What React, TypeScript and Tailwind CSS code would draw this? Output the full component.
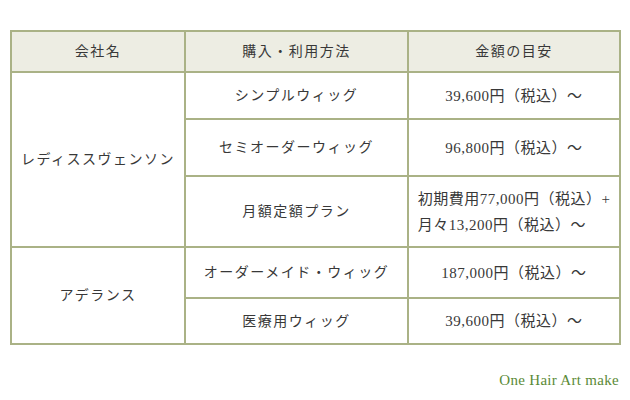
const font = { fontFamily: '"Liberation Serif", "Noto Sans CJK JP", serif' };

type Row = { company?: string; span?: number; method: string; price: string[]; h: string };

const rows: Row[] = [
  { company: "レディススヴェンソン", span: 3, method: "シンプルウィッグ", price: ["39,600円（税込）～"], h: "h-[47px]" },
  { method: "セミオーダーウィッグ", price: ["96,800円（税込）～"], h: "h-[57px]" },
  { method: "月額定額プラン", price: ["初期費用77,000円（税込）+", "月々13,200円（税込）～"], h: "h-[71px]" },
  { company: "アデランス", span: 2, method: "オーダーメイド・ウィッグ", price: ["187,000円（税込）～"], h: "h-[51px]" },
  { method: "医療用ウィッグ", price: ["39,600円（税込）～"], h: "h-[46px]" },
];

export default function App() {
  return (
    <div className="h-[400px] w-[630px] bg-white pt-[30px] pl-[10px] text-[#383838]" style={font}>
      <table className="w-[609px] table-fixed border-collapse border-2 border-[#aab286] text-center text-[14px] tracking-[1.5px]">
        <colgroup>
          <col className="w-[174px]" />
          <col className="w-[223px]" />
          <col className="w-[212px]" />
        </colgroup>
        <thead>
          <tr className="h-[41px] bg-[#edede3]">
            <th className="border-2 border-[#aab286] font-normal">会社名</th>
            <th className="border-2 border-[#aab286] font-normal">購入・利用方法</th>
            <th className="border-2 border-[#aab286] font-normal">金額の目安</th>
          </tr>
        </thead>
        <tbody>
          {rows.map((r) => (
            <tr key={r.method} className={r.h}>
              {r.company && (
                <td rowSpan={r.span} className="border-2 border-[#aab286]">
                  {r.company}
                </td>
              )}
              <td className="border-2 border-[#aab286]">{r.method}</td>
              <td className="border-2 border-[#aab286] text-[15px] leading-[26px] tracking-[0.5px]">
                {r.price.length > 1 ? (
                  <div className="inline-block text-left">
                    {r.price.map((p) => (
                      <div key={p}>{p}</div>
                    ))}
                  </div>
                ) : (
                  r.price[0]
                )}
              </td>
            </tr>
          ))}
        </tbody>
      </table>
      <div className="mt-[24px] w-[609px] text-right text-[15px] tracking-[0.3px] text-[#5b8a36]">One Hair Art make</div>
    </div>
  );
}
